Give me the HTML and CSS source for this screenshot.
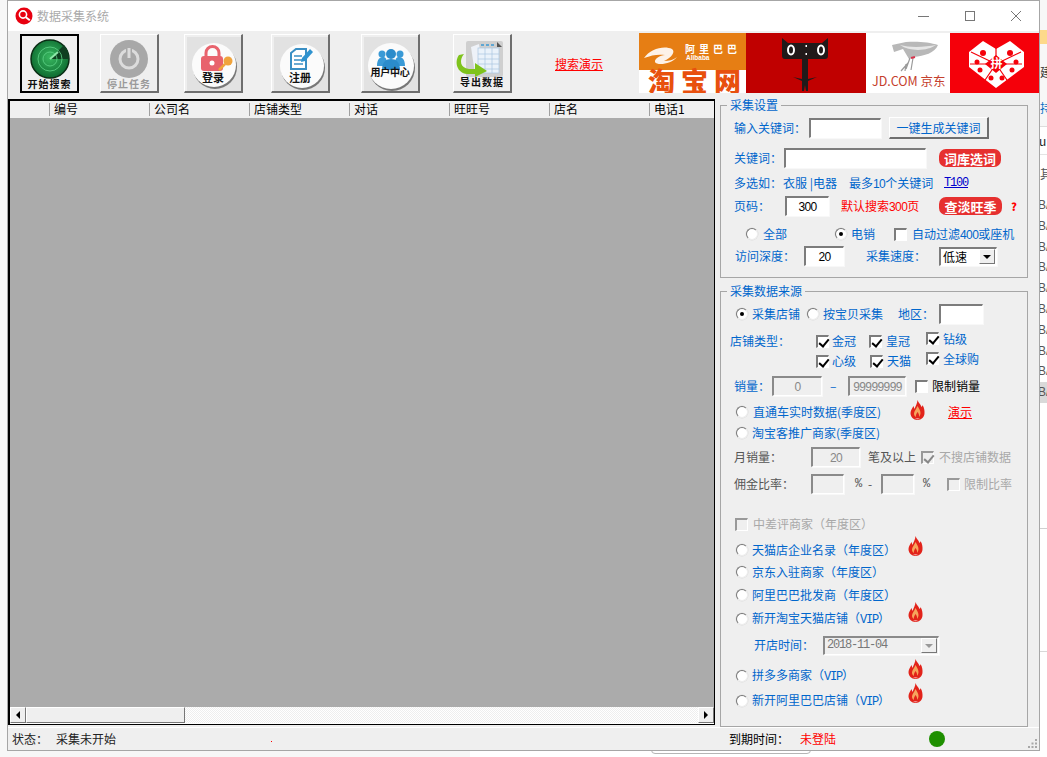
FILE: index.html
```html
<!DOCTYPE html>
<html lang="zh-CN">
<head>
<meta charset="utf-8">
<title>数据采集系统</title>
<link rel="stylesheet" href="styles.css">
</head>
<body>
<div class="desktop">
  <div class="peek">
    <div class="peek-head">
      <div class="peek-folder"></div>
      <div class="peek-cjk">建</div>
      <div class="peek-cjk blue">持</div>
    </div>
    <div class="peek-u">u</div>
    <div class="peek-qi">其</div>
    <div class="peek-row">B/</div><div class="peek-row">B/</div><div class="peek-row">B/</div><div class="peek-row">B/</div><div class="peek-row">B/</div>
    <div class="peek-row">B/</div><div class="peek-row">B/</div><div class="peek-row">B/</div><div class="peek-row">B/</div><div class="peek-row sel">B/</div>
    <div class="peek-line1"></div>
    <div class="peek-line2"></div>
  </div>
  <div class="under-left"></div>
  <div class="under-card"></div>

  <div class="window">
    <header class="titlebar">
      <svg class="app-icon" viewBox="0 0 18 18"><circle cx="9" cy="9" r="8.5" fill="#e8000f"/><circle cx="8" cy="7.5" r="3.6" fill="none" stroke="#fff" stroke-width="1.6"/><path d="M10.8 10.2l4 3" stroke="#fff" stroke-width="2"/></svg>
      <span class="title-text">数据采集系统</span>
      <div class="win-controls">
        <svg class="wc" viewBox="0 0 46 20"><path d="M17 10.5h11" stroke="#777"/></svg>
        <svg class="wc" viewBox="0 0 46 20"><rect x="18.5" y="5.5" width="9" height="9" fill="none" stroke="#777"/></svg>
        <svg class="wc" viewBox="0 0 46 20"><path d="M18 5l10 10M28 5L18 15" stroke="#777"/></svg>
      </div>
    </header>

    <div class="toolbar">
      <div class="tool tool-active">
        <svg class="tool-img" viewBox="0 0 58 58">
          <defs><radialGradient id="gr" cx="50%" cy="45%" r="55%"><stop offset="0" stop-color="#38b860"/><stop offset="1" stop-color="#0d6b30"/></radialGradient></defs>
          <g transform="translate(-1 -1)">
          <circle cx="29" cy="24" r="19" fill="url(#gr)" stroke="#0a2d14" stroke-width="1.5"/>
          <path d="M29 24L43 10A19 19 0 0 1 48 24Z" fill="#0e3f20"/>
          <circle cx="29" cy="24" r="12" fill="none" stroke="#5fd488" stroke-width=".8"/>
          <circle cx="29" cy="24" r="7" fill="none" stroke="#5fd488" stroke-width=".8"/>
          <path d="M29 24l8-7" stroke="#8ce8a8" stroke-width="2"/>
          </g>
        </svg>
        <span class="tool-label wide">开始搜索</span>
      </div>
      <div class="tool gap21">
        <svg class="tool-img" viewBox="0 0 58 58">
          <circle cx="28" cy="24" r="19" fill="#a8a8a8"/>
          <circle cx="28" cy="24" r="9" fill="none" stroke="#dcdcdc" stroke-width="3"/>
          <path d="M28 12v11" stroke="#a8a8a8" stroke-width="6"/>
          <path d="M28 13v10" stroke="#dcdcdc" stroke-width="3"/>
        </svg>
        <span class="tool-label wide off">停止任务</span>
      </div>
      <div class="tool gap25">
        <svg class="tool-img" viewBox="0 0 58 58">
          <rect x="2" y="2" width="54" height="54" fill="#e2e2e2"/>
          <g transform="translate(-4 0)">
          <circle cx="34" cy="32" r="22" fill="#777"/>
          <circle cx="33" cy="30" r="22" fill="#fbfbfb"/>
          <path d="M25 22v-4a6.500 6.500 0 0 1 13 0v4" fill="none" stroke="#e8636d" stroke-width="3"/>
          <rect x="20" y="21" width="22" height="15" rx="3" fill="#e8636d"/>
          <circle cx="31" cy="28" r="2.500" fill="#fff"/>
          <circle cx="47" cy="26" r="4.500" fill="#f0a33c"/>
          <path d="M44 29l-6 6" stroke="#f0a33c" stroke-width="2.500"/>
          </g>
        </svg>
        <span class="tool-label lb-login">登录</span>
      </div>
      <div class="tool gap28">
        <svg class="tool-img" viewBox="0 0 58 58">
          <rect x="2" y="2" width="54" height="54" fill="#e2e2e2"/>
          <g transform="translate(-5 0)">
          <circle cx="36" cy="33" r="22" fill="#777"/>
          <circle cx="35" cy="31" r="22" fill="#fbfbfb"/>
          <path d="M24 18l5-4h10v20H24Z" fill="#fff" stroke="#3a8fc4" stroke-width="2"/>
          <path d="M27 21h8M27 25h9M27 29h9" stroke="#3a8fc4" stroke-width="1.500"/>
          <path d="M35 23l8-9 3 3-8 9-4 1Z" fill="#2f93cf"/>
          </g>
        </svg>
        <span class="tool-label lb-reg">注册</span>
      </div>
      <div class="tool gap31">
        <svg class="tool-img" viewBox="0 0 58 58">
          <rect x="2" y="2" width="54" height="54" fill="#e2e2e2"/>
          <g transform="translate(-6 0)">
          <circle cx="36" cy="33" r="23" fill="#777"/>
          <circle cx="35" cy="31" r="23" fill="#fbfbfb"/>
          <circle cx="26" cy="19" r="3.500" fill="#3a9ad6"/>
          <circle cx="44" cy="19" r="3.500" fill="#3a9ad6"/>
          <path d="M21 31c0-7 3-9 6-9s4 2 4 9ZM49 31c0-7-3-9-6-9s-4 2-4 9Z" fill="#3a9ad6"/>
          <circle cx="35" cy="19" r="5" fill="#2b8ccb"/>
          <path d="M26 35c0-8 4-11 9-11s9 3 9 11Z" fill="#2b8ccb"/>
          </g>
        </svg>
        <span class="tool-label lb-user">用户中心</span>
      </div>
      <div class="tool gap33">
        <svg class="tool-img" viewBox="0 0 58 58">
          <g transform="translate(-7 0)">
          <rect x="19" y="6" width="37" height="36" rx="2" fill="#cfcfcf"/>
          <path d="M24 12l8-3 4 28-8 2Z" fill="#eef2f8"/>
          <rect x="31" y="13" width="21" height="25" fill="#eaf2fa" stroke="#a9c6e0" stroke-width=".7"/>
          <path d="M31 19h21M31 24h21M31 29h21M31 34h21M38 13v25M45 13v25" stroke="#a9c6e0" stroke-width=".7"/>
          <path d="M34 10h3M39 10h3M44 10h3" stroke="#3a9ad6" stroke-width="1.500"/>
          <path d="M50 7l5 5h-5Z" fill="#555"/>
          <path d="M17 19c-5 6-4 14 5 15h6v-6l12 8-12 6v-3h-8c-10-1-13-12-8-19Z" fill="#7fc31c"/>
          </g>
        </svg>
        <span class="tool-label wide lb-exp">导出数据</span>
      </div>
      <a class="demo-link">搜索演示</a>
      <div class="banners">
        <svg class="banner b-taobao" viewBox="0 0 107 60">
          <rect width="107" height="37" fill="#e67e14"/>
          <rect y="37" width="107" height="23" fill="#fff"/>
          <path d="M5 25c6-9 20-13 28-9 4 3-1 9-8 12 5 0 9-1 13-4-5 7-20 9-22 5-1-3 5-7 10-7-7-1-13 0-21 3Z" fill="#fff" opacity=".9"/>
          <text class="ban-cjk" x="46" y="20" font-size="10">阿里巴巴</text>
          <text class="ban-lat" x="47" y="27" font-size="6.500">Alibaba</text>
          <text class="ban-tb" x="9" y="59" font-size="27">淘宝网</text>
        </svg>
        <svg class="banner b-tmall" viewBox="0 0 120 60">
          <rect width="120" height="60" fill="#c00000"/>
          <path d="M36 5l6 5h34l6-5v18q0 3-3 3H39q-3 0-3-3Z" fill="#201a1a"/>
          <path d="M56 26h6v20l9-2-9 4v10h-2l-1-6-1 6h-2V48l-9-4 9 2Z" fill="#201a1a"/>
          <ellipse cx="45" cy="17" rx="3" ry="4.500" fill="none" stroke="#fff" stroke-width="2"/>
          <ellipse cx="75" cy="17" rx="3" ry="4.500" fill="none" stroke="#fff" stroke-width="2"/>
          <path d="M59.500 12h1.500v2h-1.500ZM59.500 20h1.500v2h-1.500Z" fill="#fff"/>
        </svg>
        <svg class="banner b-jd" viewBox="0 0 84 60">
          <rect width="84" height="60" fill="#fff"/>
          <path d="M26 12l14-3c10-1 24 0 32 3-3 8-14 11-24 12l-5 2-6-10-9 3Z" fill="#b8b8b8"/>
          <path d="M34 12c10 3 26 2 36 0-8 6-26 7-36 0Z" fill="#e6e6e6"/>
          <path d="M44 25l-4 11M47 25l-2 12M42 30l-7 8M40 31l-1 7" stroke="#9a9a9a" stroke-width="1.200"/>
          <path d="M45 25l4-1" stroke="#d8344c" stroke-width="2"/>
          <text class="ban-jd" x="6" y="53" font-size="12.500">JD.COM 京东</text>
        </svg>
        <svg class="banner b-pdd" viewBox="0 0 89 60">
          <rect width="89" height="60" fill="#f5000a"/>
          <path d="M46 16L33 8 19 19v15l27 21 28-21V19L60 8Z" fill="#fff"/>
          <path d="M46 31V12M46 31L21 19M46 31L71 19M46 31L33 50M46 31L59 50M46 31H20M46 31H72" stroke="#f5000a" stroke-width="1.200"/>
          <path d="M46 22l11 9-11 9-11-9Z" fill="#f5000a"/>
          <circle cx="33" cy="20" r="3" fill="#f5000a"/><circle cx="60" cy="20" r="3" fill="#f5000a"/>
          <circle cx="27" cy="29" r="2.500" fill="#f5000a"/><circle cx="66" cy="29" r="2.500" fill="#f5000a"/>
          <circle cx="30" cy="37" r="2.500" fill="#f5000a"/><circle cx="62" cy="37" r="2.500" fill="#f5000a"/>
          <circle cx="41" cy="45" r="2.500" fill="#f5000a"/><circle cx="52" cy="45" r="2.500" fill="#f5000a"/>
          <text class="ban-pdd" x="40.500" y="35" font-size="12">拼</text>
        </svg>
      </div>
    </div>

    <main class="main">
      <section class="grid">
        <div class="grid-head">
          <div class="col col-first"></div>
          <div class="col">编号</div>
          <div class="col">公司名</div>
          <div class="col">店铺类型</div>
          <div class="col">对话</div>
          <div class="col">旺旺号</div>
          <div class="col">店名</div>
          <div class="col">电话1</div>
        </div>
        <div class="grid-body"></div>
        <div class="hscroll">
          <div class="sb-btn"><span class="arr-left"></span></div>
          <div class="sb-thumb"></div>
          <div class="sb-track"></div>
          <div class="sb-btn"><span class="arr-right"></span></div>
        </div>
      </section>

      <aside class="side">
        <div class="panel p1">
          <span class="legend">采集设置</span>
          <div class="row pl13"><span class="w75">输入关键词：</span><span class="inp w72"></span><span class="btn ml8 w100">一键生成关键词</span></div>
          <div class="row mt10 pl13"><span class="w50">关键词：</span><span class="inp w142"></span><span class="badge ml13 w62">词库选词</span></div>
          <div class="row mt5 pl13"><span class="w49">多选如：</span><span class="w66">衣服 |电器</span><span class="w95">最多<span class="dg">10</span>个关键词</span><a class="t100">T100</a></div>
          <div class="row mt3 pl13"><span class="w51">页码：</span><span class="inp w44 val">300</span><span class="ml12 w98 red">默认搜索<span class="dg">300</span>页</span><span class="badge w63">查淡旺季</span><span class="ml9 qmark">?</span></div>
          <div class="row mt8 pl25"><span class="radio"></span><span class="ml5 w72">全部</span><span class="radio on"></span><span class="ml4 w43">电销</span><span class="chk"></span><span class="ml5">自动过滤<span class="dg">400</span>或座机</span></div>
          <div class="row mt2 pl14"><span class="w69">访问深度：</span><span class="inp w40 val">20</span><span class="ml22 w73">采集速度：</span><span class="inp combo w58"><span class="combo-v">低速</span><span class="combo-b"><span class="arr-down"></span></span></span></div>
        </div>

        <div class="panel p2">
          <span class="legend">采集数据来源</span>
          <div class="row pl15"><span class="radio on"></span><span class="ml4 w55">采集店铺</span><span class="radio"></span><span class="ml4 w75">按宝贝采集</span><span class="w41">地区：</span><span class="inp w44"></span></div>
          <div class="row mt7 pl9"><span class="w86">店铺类型：</span><span class="chk on"></span><span class="ml3 w37">金冠</span><span class="chk on"></span><span class="ml4 w40">皇冠</span><span class="chk on up"></span><span class="ml4 up">钻级</span></div>
          <div class="row pl95"><span class="chk on"></span><span class="ml3 w38">心级</span><span class="chk on"></span><span class="ml4 w39">天猫</span><span class="chk on up"></span><span class="ml4 up">全球购</span></div>
          <div class="row mt5 pl13"><span class="w38">销量：</span><span class="inp off w50 val">0</span><span class="ml8 w18">–</span><span class="inp off w58 val">99999999</span><span class="chk ml9"></span><span class="ml4 blk">限制销量</span></div>
          <div class="row mt6 pl15"><span class="radio"></span><span class="ml5 w157">直通车实时数据(季度区)</span><svg class="flame f-4"><use href="#flame"/></svg><a class="ml23 demo-red">演示</a></div>
          <div class="row mt1 pl15"><span class="radio"></span><span class="ml4">淘宝客推广商家(季度区)</span></div>
          <div class="row mt4 pl13 dim"><span class="w77">月销量：</span><span class="inp off w49 val">20</span><span class="ml8 w53">笔及以上</span><span class="chk on off"></span><span class="ml5 gray">不搜店铺数据</span></div>
          <div class="row mt7 pl13 dim"><span class="w77">佣金比率：</span><span class="inp off w33"></span><span class="ml11 w13 mono">%</span><span class="w13">-</span><span class="inp off w33"></span><span class="ml9 w24 mono">%</span><span class="chk off"></span><span class="ml4 gray">限制比率</span></div>
          <div class="row mt20 pl14"><span class="chk off"></span><span class="ml5 gray">中差评商家（年度区）</span></div>
          <div class="row mt6 pl15"><span class="radio"></span><span class="ml4 w156">天猫店企业名录（年度区）</span><svg class="flame f-8"><use href="#flame"/></svg></div>
          <div class="row mt2 pl15"><span class="radio"></span><span class="ml4">京东入驻商家（年度区）</span></div>
          <div class="row mt3 pl15"><span class="radio"></span><span class="ml4">阿里巴巴批发商（年度区）</span></div>
          <div class="row mt4 pl15"><span class="radio"></span><span class="ml4 w156">新开淘宝天猫店铺（<span class="mono">VIP</span>）</span><svg class="flame f-14"><use href="#flame"/></svg></div>
          <div class="row mt6 pl33"><span class="w69">开店时间：</span><span class="inp combo off w116"><span class="combo-v date">2018-11-04</span><span class="combo-b"><span class="arr-down off"></span></span></span></div>
          <div class="row mt11 pl15"><span class="radio"></span><span class="ml4 w156">拼多多商家（<span class="mono">VIP</span>）</span><svg class="flame f-14"><use href="#flame"/></svg></div>
          <div class="row mt5 pl15"><span class="radio"></span><span class="ml4 w156">新开阿里巴巴店铺（<span class="mono">VIP</span>）</span><svg class="flame f-16"><use href="#flame"/></svg></div>
        </div>
      </aside>
    </main>

    <footer class="status">
      <span class="st-a">状态：</span>
      <span class="st-b">采集未开始</span>
      <span class="st-dot"></span>
      <span class="st-c">到期时间：</span>
      <span class="st-d">未登陆</span>
      <span class="st-led"></span>
      <svg class="grip" viewBox="0 0 11 11"><path d="M8 1h2v2H8ZM4.500 4.500h2v2h-2ZM8 4.500h2v2H8ZM1 8h2v2H1ZM4.500 8h2v2h-2ZM8 8h2v2H8Z" fill="#a8a8a8"/></svg>
    </footer>
  </div>
</div>

<svg class="defs" width="0" height="0">
  <symbol id="flame" viewBox="0 0 14 20">
    <path d="M7 0c1 3 3 4 4 7 1-1 1-2 1-2 2 3 2 6 2 8 0 4-3 7-7 7s-7-3-7-7c0-3 2-5 3-7l1 3C5 6 7 3 7 0Z" fill="#e2231a"/>
    <path d="M7 6c1 2 3 4 3 7 0 2-1 3-1.500 4 .5-2-.5-4-1.500-5-1 2-2 3-1.500 5C4 16 3.500 15 3.500 13.500 3.500 11 6 9 7 6Z" fill="#f6a45c"/>
    <path d="M4 18c2 1.500 4 1.500 6 0-2 .8-4 .8-6 0Z" fill="#fff"/>
  </symbol>
</svg>
</body>
</html>
```
FILE: styles.css
```css
* { box-sizing: border-box; }
html, body { margin: 0; padding: 0; }
body {
  width: 1047px;
  height: 757px;
  overflow: hidden;
  background: #fff;
  font: 12px/1 "Noto Sans CJK SC", "Liberation Sans", sans-serif;
  color: #0066cc;
}
.defs { position: absolute; }
.desktop { position: relative; width: 1047px; height: 757px; overflow: hidden; background: #fff; }

/* things showing behind the window */
.peek { position: absolute; left: 1039px; top: 0; width: 8px; height: 757px; padding-left: 1px; overflow: hidden; color: #555; }
.peek-head { height: 127px; margin-left: -1px; padding-left: 1px; padding-top: 30px; background: #f7f7f7; border-bottom: 1px solid #ddd; }
.peek-folder { height: 14px; background: #fdd98a; }
.peek-cjk { margin-top: 19px; height: 17px; color: #333; line-height: 17px; }
.peek-cjk.blue { color: #0b6fc4; }
.peek-u { height: 28px; padding-top: 8px; margin-left: -1px; border-bottom: 1px solid #e4e4e4; color: #222; }
.peek-qi { height: 40px; padding-top: 13px; }
.peek-row { height: 20.800px; line-height: 20px; margin-left: -2px; font-family: "Liberation Sans", sans-serif; }
.peek-row.sel { background: #d9d9d9; }
.peek-line1 { height: 1px; margin-top: 125px; background: #d0d0d0; }
.peek-line2 { height: 1px; margin-top: 122px; background: #d8d8d8; }
.under-left { position: absolute; left: 0; top: 0; width: 470px; height: 757px; background: #f7f7f7; }
.under-card { position: absolute; left: 651px; top: 740px; width: 160px; height: 14px; border: 1px solid #b5b5b5; border-radius: 4px; background: #fff; }

/* window frame */
.window {
  position: absolute;
  left: 7px;
  top: 0;
  width: 1033px;
  height: 751px;
  display: flex;
  flex-direction: column;
  border: 1px solid #a6a6a6;
  background: #efefef;
}
.titlebar { display: flex; align-items: center; height: 30px; flex: none; background: #fff; padding-left: 7px; }
.app-icon { width: 18px; height: 18px; }
.title-text { margin-left: 4px; color: #aaa; font-size: 12px; }
.win-controls { display: flex; margin-left: auto; }
.wc { width: 46px; height: 20px; display: block; }

/* toolbar */
.toolbar { display: flex; align-items: flex-start; height: 68px; flex: none; padding: 3px 0 0 12px; }
.tool {
  position: relative;
  flex: none;
  width: 59px;
  height: 59px;
  display: flex;
  flex-direction: column;
  align-items: center;
  justify-content: flex-end;
  background: #efefef;
  border: 1px solid #fff;
  border-right: 2px solid #6e6e6e;
  border-bottom: 2px solid #6e6e6e;
  overflow: hidden;
}
.tool-active { border: 2px solid #000; }
.gap21 { margin-left: 21px; }
.gap25 { margin-left: 25px; }
.gap28 { margin-left: 28px; }
.gap31 { margin-left: 31px; }
.gap33 { margin-left: 33px; }
.tool-img { position: absolute; left: 0; top: 0; width: 58px; height: 58px; }
.tool-label { position: relative; font-size: 10px; font-weight: 700; line-height: 12px; color: #111; margin-bottom: 1px; white-space: nowrap; }
.tool-label.wide { letter-spacing: 1px; }
.tool-label.off { color: #9a9a9a; }
.lb-login { margin-bottom: 8px; font-size: 11px; }
.lb-reg { margin-bottom: 8px; font-size: 11px; }
.lb-user { margin-bottom: 13px; letter-spacing: -.2px; }
.tool-label.lb-exp { margin-bottom: 3px; }
.demo-link { margin: 22px 0 0 43px; width: 84px; color: #f00; text-decoration: underline; flex: none; line-height: 16px; }
.banners { display: flex; flex: none; margin-top: -1px; width: 400px; height: 60px; }
.banner { display: block; height: 60px; flex: none; }
.b-taobao { width: 107px; }
.b-tmall { width: 120px; }
.b-jd { width: 84px; }
.b-pdd { width: 89px; }
.ban-cjk { fill: #fff; font-weight: 700; letter-spacing: 4px; }
.ban-lat { fill: #fff; font-family: "Liberation Sans", sans-serif; font-weight: 700; }
.ban-tb { fill: #e8500e; font-weight: 900; letter-spacing: 6px; }
.ban-jd { fill: #c5402c; }
.ban-pdd { fill: #fff; font-weight: 700; }

/* layout of the body */
.main { display: flex; height: 628px; flex: none; }
.grid { width: 707px; height: 626px; display: flex; flex-direction: column; border: 1px solid #000; border-top-width: 2px; border-left-width: 2px; flex: none; background: #efefef; }
.grid-head { display: flex; height: 17px; flex: none; overflow: hidden; background: #f0f0f0; color: #000; }
.col { position: relative; flex: none; width: 100px; padding-left: 5px; line-height: 15px; white-space: nowrap; }
.col-first { width: 39px; }
.col::before { content: ""; position: absolute; left: 0; top: 2px; bottom: 2px; width: 1px; background: #a0a0a0; }
.col-first::before { display: none; }
.grid-body { flex: 1; background: #ababab; }
.hscroll { display: flex; height: 17px; flex: none; background: #fff; padding-bottom: 1px; }
.sb-btn { flex: none; width: 16px; display: flex; align-items: center; justify-content: center; background: #efefef; border: 1px solid #fff; border-right-color: #777; border-bottom-color: #777; }
.sb-thumb { flex: none; width: 159px; background: #efefef; border: 1px solid #fff; border-right-color: #777; border-bottom-color: #777; }
.sb-track { flex: 1; background: repeating-conic-gradient(#fff 0 25%, #eee 0 50%) 0 0 / 2px 2px; }
.arr-left { border: 4px solid transparent; border-left: 0; border-right: 4px solid #000; }
.arr-right { border: 4px solid transparent; border-right: 0; border-left: 4px solid #000; }
.arr-down { border: 4px solid transparent; border-bottom: 0; border-top: 4px solid #000; }
.arr-down.off { border-top-color: #999; }

/* right column */
.side { margin: 6px 0 0 5px; width: 308px; flex: none; }
.panel { position: relative; width: 308px; border: 1px solid #a6a6a6; padding-top: 12px; }
.p1 { height: 173px; }
.p2 { height: 436px; margin-top: 13px; }
.legend { position: absolute; left: 6px; top: -8px; padding: 0 3px; background: #efefef; line-height: 14px; }

.row { display: flex; align-items: center; height: 20px; white-space: nowrap; }
.row > span, .row > a, .row > svg { flex: none; }
.dim { color: #555; }
.gray { color: #a8a8a8; }
.red { color: #f00; }
.blk { color: #000; }
.up { margin-top: -5px; }
.dg { font-family: "Liberation Sans", sans-serif; letter-spacing: -.6px; }
.mono { font-family: "Liberation Mono", monospace; font-size: 12px; letter-spacing: -1.2px; }

.inp { display: flex; align-items: center; height: 20px; background: #fff; border: 2px solid #7c7c7c; border-right: 1px solid #fff; border-bottom: 1px solid #fff; box-shadow: 1px 1px 0 #f8f8f8; }
.inp.val { justify-content: center; color: #000; font-family: "Liberation Sans", sans-serif; font-size: 12px; letter-spacing: -.6px; }
.inp.off { background: #efefef; color: #888; border-color: #8a8a8a #fff #fff #8a8a8a; }
.btn { height: 22px; display: flex; align-items: center; justify-content: center; background: #f0f0f0; border: 1px solid #fff; border-right: 2px solid #6e6e6e; border-bottom: 2px solid #6e6e6e; color: #0066cc; }
.badge { height: 18px; display: flex; align-items: center; justify-content: center; background: #e6302f; color: #fff; font-size: 13px; font-weight: 700; border-radius: 7px; }
.t100 { color: #00c; text-decoration: underline; font-family: "Liberation Mono", monospace; font-size: 12px; letter-spacing: -1.2px; }
.qmark { color: #f00; font-weight: 900; font-size: 11px; }
.demo-red { color: #f00; text-decoration: underline; }

.radio { position: relative; width: 12px; height: 12px; border-radius: 50%; background: #fff; border: 1px solid; border-color: #777 #eee #eee #777; box-shadow: 0 0 0 .5px #ddd; }
.radio.on::after { content: ""; position: absolute; left: 3px; top: 3px; width: 4px; height: 4px; border-radius: 50%; background: #000; }
.chk { position: relative; width: 13px; height: 13px; background: #fff; border: 2px solid #7c7c7c; border-right: 1px solid #fff; border-bottom: 1px solid #fff; }
.chk.on::after { content: ""; position: absolute; left: 2.500px; top: 0; width: 4px; height: 8px; border: solid #000; border-width: 0 2px 2px 0; transform: rotate(40deg); }
.chk.off { background: #efefef; border-color: #999 #fff #fff #999; }
.chk.on.off::after { border-color: #888; }

.combo { justify-content: space-between; color: #000; height: 19px; }
.combo-v { padding-left: 2px; line-height: 15px; }
.combo-v.date { color: #777; font-family: "Liberation Mono", monospace; font-size: 12px; letter-spacing: -1.2px; }
.combo-b { width: 16px; height: 15px; margin-right: 1px; display: flex; align-items: center; justify-content: center; background: #efefef; border: 1px solid #fff; border-right-color: #777; border-bottom-color: #777; }

.flame { width: 15px; height: 20px; position: relative; }
.f-4 { top: -2px; }
.f-8 { top: -4px; }
.f-14 { top: -7px; }
.f-16 { top: -8px; }

/* spacing helpers */
.pl9 { padding-left: 9px; } .pl13 { padding-left: 13px; } .pl14 { padding-left: 14px; } .pl15 { padding-left: 15px; }
.pl25 { padding-left: 25px; } .pl33 { padding-left: 33px; } .pl95 { padding-left: 95px; }
.mt1 { margin-top: 1px; } .mt2 { margin-top: 2px; } .mt3 { margin-top: 3px; } .mt4 { margin-top: 4px; } .mt5 { margin-top: 5px; }
.mt6 { margin-top: 6px; } .mt7 { margin-top: 7px; } .mt8 { margin-top: 8px; } .mt10 { margin-top: 10px; } .mt11 { margin-top: 11px; } .mt20 { margin-top: 20px; }
.ml3 { margin-left: 3px; } .ml4 { margin-left: 4px; } .ml5 { margin-left: 5px; } .ml8 { margin-left: 8px; } .ml9 { margin-left: 9px; }
.ml11 { margin-left: 11px; } .ml12 { margin-left: 12px; } .ml13 { margin-left: 13px; } .ml22 { margin-left: 22px; } .ml23 { margin-left: 23px; }
.w13 { width: 13px; } .w18 { width: 18px; } .w24 { width: 24px; } .w33 { width: 33px; } .w37 { width: 37px; } .w38 { width: 38px; } .w39 { width: 39px; }
.w40 { width: 40px; } .w41 { width: 41px; } .w43 { width: 43px; } .w44 { width: 44px; } .w49 { width: 49px; } .w50 { width: 50px; } .w51 { width: 51px; }
.w53 { width: 53px; } .w55 { width: 55px; } .w58 { width: 58px; } .w62 { width: 62px; } .w63 { width: 63px; } .w66 { width: 66px; } .w69 { width: 69px; }
.w72 { width: 72px; } .w73 { width: 73px; } .w75 { width: 75px; } .w77 { width: 77px; } .w86 { width: 86px; } .w95 { width: 95px; } .w98 { width: 98px; }
.w100 { width: 100px; } .w116 { width: 116px; } .w142 { width: 142px; } .w156 { width: 156px; } .w157 { width: 157px; }

/* status bar */
.status { position: relative; display: flex; align-items: center; flex: 1; color: #222; padding-left: 4px; border-top: 1px solid #fff; }
.st-a { width: 44px; }
.st-b { width: 215px; color: #222; }
.st-dot { width: 1px; height: 1px; background: #f00; margin-top: 4px; }
.st-c { margin-left: 457px; width: 71px; color: #000; }
.st-d { width: 129px; color: #f00; }
.st-led { width: 16px; height: 16px; border-radius: 50%; background: #1e8f00; }
.grip { position: absolute; right: 1px; bottom: 1px; width: 11px; height: 11px; }
```
